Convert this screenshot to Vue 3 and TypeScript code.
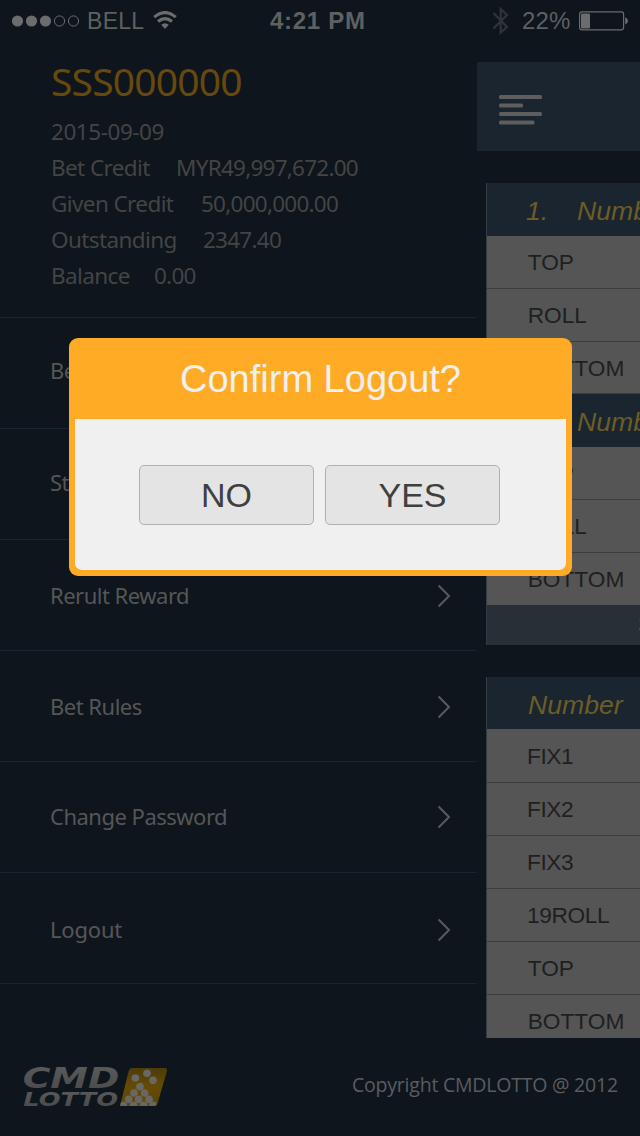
<script setup lang="ts">
interface Credit { label: string; value: string; cls: string }
interface Block { index: string; rows: string[] }

const credits: Credit[] = [
  { label: 'Bet Credit', value: 'MYR49,997,672.00', cls: 'bet' },
  { label: 'Given Credit', value: '50,000,000.00', cls: 'given' },
  { label: 'Outstanding', value: '2347.40', cls: 'outstanding' },
  { label: 'Balance', value: '0.00', cls: 'balance' },
]
const menu: string[] = ['Bet', 'Statement', 'Rerult Reward', 'Bet Rules', 'Change Password', 'Logout']
const blocks: Block[] = [
  { index: '1.', rows: ['TOP', 'ROLL', 'BOTTOM'] },
  { index: '2.', rows: ['TOP', 'ROLL', 'BOTTOM'] },
]
const fixed: string[] = ['FIX1', 'FIX2', 'FIX3', '19ROLL', 'TOP', 'BOTTOM']
const balls: [number, number][] = [
  [441, 100], [406, 114], [459, 121], [420, 140], [402, 159], [434, 159],
  [386, 178], [416, 178], [447, 178], [370, 196], [401, 196], [431, 196], [459, 196],
]
</script>

<template>
  <div class="screen">
    <header class="status">
      <svg class="signal" width="69" height="14" viewBox="0 0 69 14">
        <circle cx="6.5" cy="7" r="5.6" /><circle cx="20.5" cy="7" r="5.6" /><circle cx="34.5" cy="7" r="5.6" />
        <circle class="hollow" cx="48.5" cy="7" r="5.1" /><circle class="hollow" cx="62.5" cy="7" r="5.1" />
      </svg>
      <span class="carrier">BELL</span>
      <svg class="wifi" width="24" height="19" viewBox="0 0 24 19">
        <path class="arc" d="M1.2 6.1Q12 -3 22.8 6.1" />
        <path class="arc" d="M5 10.5Q12 4.6 19 10.5" />
        <path d="M8.2 13.8Q12 10.8 15.8 13.8L12 18Z" />
      </svg>
      <span class="time">4:21 PM</span>
      <svg class="bluetooth" width="17" height="28" viewBox="0 0 17 28">
        <path d="M1.5 6L15 20L8.7 25.5V2L15 8L1.5 21.5" />
      </svg>
      <span class="percent">22%</span>
      <svg class="battery" width="50" height="20" viewBox="0 0 50 20">
        <rect class="shell" x="0.6" y="0.8" width="44" height="18" rx="2.2" />
        <rect x="2" y="2.4" width="9" height="15" rx="1" />
        <path d="M46.2 6.2Q49 7.5 49 9.8T46.2 13.4Z" />
      </svg>
    </header>

    <main class="columns">
      <aside class="menu">
        <section class="account">
          <h1>SSS000000</h1>
          <p class="date">2015-09-09</p>
          <p v-for="c in credits" :key="c.label" :class="c.cls">
            <span class="label">{{ c.label }}</span><span class="value">{{ c.value }}</span>
          </p>
        </section>
        <nav>
          <a v-for="m in menu" :key="m">
            <span>{{ m }}</span>
            <svg width="14" height="24" viewBox="0 0 14 24"><path d="M1.6 1.5L12 12L1.6 22.5" /></svg>
          </a>
        </nav>
      </aside>

      <section class="page">
        <div class="toolbar">
          <svg width="43" height="31" viewBox="0 0 43 31">
            <rect width="43" height="4" rx="1.5" y="0" />
            <rect width="24" height="4" rx="1.5" y="8.5" />
            <rect width="43" height="4" rx="1.5" y="17" />
            <rect width="35.5" height="4" rx="1.5" y="25.5" />
          </svg>
        </div>
        <div class="table first">
          <template v-for="b in blocks" :key="b.index">
            <div class="head"><span class="index">{{ b.index }}</span><span>Number</span></div>
            <div v-for="r in b.rows" :key="r" class="cell">{{ r }}</div>
          </template>
          <div class="sum">SUM</div>
        </div>
        <div class="table second">
          <div class="head">Number</div>
          <div v-for="f in fixed" :key="f" class="cell" :class="{ tight: /\d/.test(f) }">{{ f }}</div>
        </div>
      </section>
    </main>

    <footer class="footer">
      <svg class="logo" width="170" height="58" viewBox="0 60 510 174">
        <defs>
          <linearGradient id="silver" x1="0" y1="0" x2="0" y2="1">
            <stop offset="0" stop-color="#5c5c5c" /><stop offset="1" stop-color="#484848" />
          </linearGradient>
          <linearGradient id="gold" x1="0" y1="0" x2="0" y2="1">
            <stop offset="0" stop-color="#4b3b08" /><stop offset="0.5" stop-color="#654b04" /><stop offset="1" stop-color="#5b4708" />
          </linearGradient>
          <clipPath id="tile">
            <path d="M396 84H494Q503 84 501 93L473 188Q470 198 460 198H360L386 93Q389 84 396 84Z" />
          </clipPath>
        </defs>
        <text class="brand" x="68" y="145" font-size="83" textLength="290" lengthAdjust="spacingAndGlyphs">CMD</text>
        <text class="brand" x="70" y="198" font-size="57" textLength="284" lengthAdjust="spacingAndGlyphs">LOTTO</text>
        <g clip-path="url(#tile)">
          <rect x="355" y="80" width="150" height="120" fill="url(#gold)" />
          <circle v-for="(p, i) in balls" :key="i" :cx="p[0]" :cy="p[1]" r="11.5" fill="#686764" />
        </g>
      </svg>
      <span class="copyright">Copyright CMDLOTTO @ 2012</span>
    </footer>

    <div class="dialog">
      <h2>Confirm Logout?</h2>
      <div class="actions">
        <button type="button">NO</button>
        <button type="button">YES</button>
      </div>
    </div>
  </div>
</template>

<style>
body { background: #0e151d; }
</style>

<style scoped>
* { box-sizing: border-box; }
h1, h2, p { margin: 0; font-weight: 400; }
.screen {
  position: relative; display: flex; flex-direction: column;
  width: 640px; height: 1136px; overflow: hidden;
  background: #0e151d; color: #4a4a4a;
  font-family: "Liberation Sans", Arial, sans-serif; white-space: nowrap;
}
.status {
  display: flex; align-items: center; height: 62px; padding: 0 11px 20px 11px;
  color: #5f6061; fill: #6b6c6d; font-size: 23px;
}
.status > * { flex: none; }
.hollow { fill: none; stroke: #6b6c6d; }
.carrier { width: 66px; padding-left: 7px; letter-spacing: 0.3px; }
.wifi { margin-left: 7px; margin-bottom: 2px; }
.arc { fill: none; stroke: #6b6c6d; stroke-width: 3.2; }
.time { margin-left: 93px; width: 96px; font-size: 24px; font-weight: 700; letter-spacing: 0.7px; }
.bluetooth { margin-left: 126px; fill: none; stroke: #303438; stroke-width: 2.2; }
.percent { margin-left: 13px; width: 49px; letter-spacing: 0.2px; font-size: 24px; }
.battery { margin-left: 8px; }
.shell { fill: none; stroke: #6b6c6d; stroke-width: 1.2; }
.columns { display: flex; height: 976px; overflow: hidden; }
.menu { width: 477px; flex: none; font-family: "Noto Sans", "Open Sans", sans-serif; }
.account { height: 256px; border-bottom: 1px solid #1a242e; padding-left: 51px; font-size: 22.5px; color: #444; }
.account h1 { height: 52px; line-height: 38px; font-size: 39px; letter-spacing: -0.8px; color: #67490d; }
.account p { display: flex; height: 36px; line-height: 36px; letter-spacing: -0.75px; }
.account .date { letter-spacing: -0.45px; }
.label { flex: none; }
.account .label { letter-spacing: -0.6px; }
.bet .label { width: 125px; }
.given .label { width: 150px; }
.outstanding .label { width: 152px; }
.balance .label { width: 103px; }
nav a {
  display: flex; justify-content: space-between; align-items: center; height: 111px;
  padding: 0 26px 0 50px; border-bottom: 1px solid #1a242e;
  font-size: 22px; letter-spacing: -0.5px; color: #565656;
}
nav a span { margin-top: -2px; }
nav a:nth-child(1) { padding-bottom: 5px; }
nav a:nth-child(2) { padding-bottom: 3px; }
nav a:nth-child(3), nav a:nth-child(4) { padding-top: 2px; }
nav a:nth-child(6) { padding-top: 4px; letter-spacing: -0.2px; }
nav svg { fill: none; stroke: #5a5a5a; stroke-width: 2; }
.page { width: 163px; flex: none; overflow: hidden; }
.toolbar { height: 89px; background: #1a2530; padding: 33px 0 0 22px; }
.toolbar svg { display: block; fill: #5e5e5e; }
.table { margin-left: 9px; border-left: 1px solid #333c44; }
.first { margin-top: 32px; }
.second { margin-top: 32px; }
.head {
  display: flex; height: 53px; line-height: 56px; padding-left: 41px;
  background: #1a2530; color: #6b5d27; font-size: 26.6px; font-style: italic;
}
.first .head { padding-left: 39px; }
.second .head { height: 52px; }
.index { flex: none; width: 51px; }
.cell { height: 53px; line-height: 53px; padding-left: 40.7px; background: #555; color: #1f1f1f; font-size: 22.7px; border-bottom: 1px solid #3d3d3d; }
.tight { padding-left: 40px; letter-spacing: -0.4px; }
.first .cell:nth-of-type(4) { height: 52px; }
.first .cell:nth-of-type(8) { height: 52px; border-bottom: 0; }
.second .cell:nth-of-type(2) { height: 54px; line-height: 55px; }
.sum { height: 40px; line-height: 40px; padding-left: 151px; background: #282f36; color: #565a5e; font-size: 22px; }
.footer { display: flex; height: 98px; align-items: flex-start; }
.logo { margin-top: 22px; flex: none; }
.brand { font-family: "DejaVu Sans", sans-serif; font-weight: 700; font-style: italic; fill: url(#silver); }
.copyright { margin: 33px 0 0 182px; font-family: "Open Sans", "Noto Sans", sans-serif; font-size: 19.5px; letter-spacing: -0.22px; color: #5a5d60; }
.dialog {
  position: absolute; left: 69px; top: 338px; width: 503px; height: 238px;
  padding: 0 6px 6px; border-radius: 9px; background: #ffab25;
}
.dialog h2 { height: 81px; line-height: 82px; text-align: center; font-size: 38px; color: #f0f0f0; }
.actions {
  display: flex; gap: 11px; height: 151px; padding: 46px 0 0 64px;
  background: #f0f0f0; border-radius: 0 0 7px 7px;
}
button {
  width: 175px; height: 60px; padding: 0; border: 1px solid #b0b0b0; border-radius: 5px;
  background: #e4e4e4; color: #3f3f3f; font: 34px "Liberation Sans", Arial, sans-serif;
}
</style>
